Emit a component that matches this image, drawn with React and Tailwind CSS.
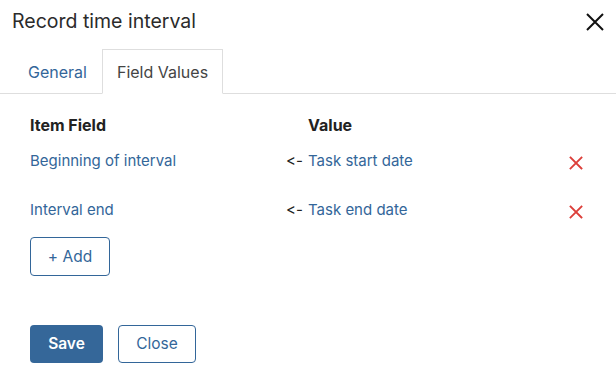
import React, { useState } from "react";

const rows = [
  { field: "Beginning of interval", value: "Task start date" },
  { field: "Interval end", value: "Task end date" },
];

function RemoveIcon() {
  return (
    <svg width="14" height="14" viewBox="0 0 14 14" fill="none" stroke="#dc3f3a" strokeWidth="1.8" strokeLinecap="square">
      <path d="M1.5 1.5 L12.5 12.5 M12.5 1.5 L1.5 12.5" />
    </svg>
  );
}

export default function App() {
  const [tab, setTab] = useState("values");

  return (
    <div className="w-[616px] h-[370px] bg-white text-[#333] font-['Inter','Liberation_Sans',sans-serif] overflow-hidden [font-variant-ligatures:none] [font-feature-settings:'calt'_0]">
      {/* header */}
      <div className="h-[43px] flex items-center justify-between pl-[12px] pr-[10px]">
        <span className="text-[19.5px] text-[#2b2b2b]">Record time interval</span>
        <button className="w-[22px] h-[22px] flex items-center justify-center">
          <svg width="20" height="20" viewBox="0 0 20 20" fill="none" stroke="#111" strokeWidth="2">
            <path d="M2 2 L18 18 M18 2 L2 18" />
          </svg>
        </button>
      </div>

      {/* tabs */}
      <div className="mt-[6px] flex pl-[13px] border-b border-[#dedede]">
        <button
          onClick={() => setTab("general")}
          className={`h-[45px] -mb-px px-[14px] text-[16px] border ${tab === "general" ? "border-[#dedede] border-b-white text-[#444]" : "border-transparent text-[#336699]"}`}
        >
          General
        </button>
        <button
          onClick={() => setTab("values")}
          className={`h-[45px] -mb-px px-[14px] text-[16px] border ${tab === "values" ? "border-[#dedede] border-b-white text-[#444]" : "border-transparent text-[#336699]"}`}
        >
          Field Values
        </button>
      </div>

      {/* body */}
      <div className="px-[30px] pr-[33px]">
        <div className="mt-[12px] h-[37px] flex items-center text-[16px] font-bold text-[#222]">
          <span className="w-[278px]">Item Field</span>
          <span>Value</span>
        </div>

        <div className="flex flex-col gap-[13px]">
          {rows.map((r) => (
            <div key={r.field} className="h-[36px] flex items-center text-[15px]">
              <span className="w-[256px] text-[#336699]">{r.field}</span>
              <span className="w-[22px] text-[#222]">&lt;-</span>
              <span className="text-[#336699]">{r.value}</span>
              <button className="ml-auto flex items-center mt-[4px]">
                <RemoveIcon />
              </button>
            </div>
          ))}
        </div>

        <button className="mt-[9px] h-[39px] w-[80px] rounded-[4px] border border-[#336699] text-[15.5px] text-[#336699]">
          + Add
        </button>

        <div className="mt-[49px] flex gap-[15px]">
          <button className="h-[38px] w-[73px] rounded-[4px] bg-[#356799] text-white text-[15.5px] font-semibold">
            Save
          </button>
          <button className="h-[38px] w-[78px] rounded-[4px] border border-[#336699] text-[15.5px] text-[#336699]">
            Close
          </button>
        </div>
      </div>
    </div>
  );
}
